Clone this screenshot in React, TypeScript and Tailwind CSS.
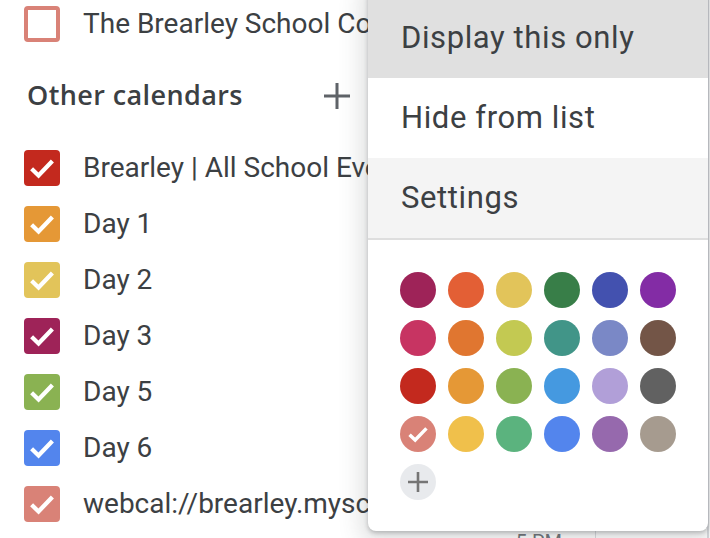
import React from "react";

type Cal = { name: string; color: string; checked: boolean };

const top: Cal = { name: "The Brearley School Community", color: "#d98277", checked: false };
const others: Cal[] = [
  { name: "Brearley | All School Events", color: "#c3291e", checked: true },
  { name: "Day 1", color: "#e59836", checked: true },
  { name: "Day 2", color: "#e2c45a", checked: true },
  { name: "Day 3", color: "#9e2358", checked: true },
  { name: "Day 5", color: "#8ab252", checked: true },
  { name: "Day 6", color: "#5385ed", checked: true },
  { name: "webcal://brearley.myschoolapp.com", color: "#d98277", checked: true },
];

const palette = [
  ["#9e2358", "#e35f35", "#e2c45a", "#387e48", "#4351af", "#832ca5"],
  ["#c73462", "#e07630", "#c3c952", "#419588", "#7a88c6", "#735547"],
  ["#c3291e", "#e59836", "#8ab252", "#4599e0", "#b19fd8", "#616161"],
  ["#d98277", "#f0c04b", "#5bb37e", "#5385ed", "#9669ad", "#a69b8f"],
];

function Check({ size = 24 }: { size?: number }) {
  return (
    <svg width={size} height={size} viewBox="0 0 24 24" fill="none">
      <path d="M4.2 12.6 L9.4 17.6 L19.8 6.8" stroke="white" strokeWidth="3.2" strokeLinecap="butt" strokeLinejoin="miter" />
    </svg>
  );
}

function Row({ cal }: { cal: Cal }) {
  return (
    <div className="flex h-14 items-center pl-6 whitespace-nowrap">
      {cal.checked ? (
        <div
          className="flex h-9 w-9 shrink-0 items-center justify-center rounded-[4px]"
          style={{ backgroundColor: cal.color }}
        >
          <Check size={32} />
        </div>
      ) : (
        <div
          className="h-9 w-9 shrink-0 rounded-[4px] border-[4px]"
          style={{ borderColor: cal.color }}
        />
      )}
      <span className="ml-[23px] text-[28px] text-[#3c4043]">{cal.name}</span>
    </div>
  );
}

export default function App() {
  return (
    <div
      className="relative h-[538px] w-[710px] overflow-hidden bg-white"
      style={{ fontFamily: "Roboto, 'Noto Sans', sans-serif" }}
    >
      <div className="flex h-full">
        <div className="w-[500px] shrink-0 -mt-1">
          <Row cal={top} />
          <div className="flex h-[88px] items-center pl-[27px] pr-[148px]">
            <span className="flex-1 -mt-[2px] font-['Open_Sans',Roboto,sans-serif] text-[27px] font-semibold tracking-[0.4px] text-[#3c4043]">
              Other calendars
            </span>
            <svg width="30" height="30" viewBox="0 0 30 30">
              <path d="M15 2 V28 M2 15 H28" stroke="#5f6368" strokeWidth="3" />
            </svg>
          </div>
          {others.map((c) => (
            <Row key={c.name} cal={c} />
          ))}
        </div>
        <div className="w-[95px] shrink-0 pt-[527px] pr-[33px] text-right text-[20px] text-[#70757a]">
          5 PM
        </div>
        <div className="flex w-[114px] shrink-0 flex-col border-l border-r-2 border-[#dadce0]">
          <div className="h-12 shrink-0 border-b border-[#dadce0]" />
          <div className="h-20 shrink-0 border-b border-[#dadce0]" />
          <div className="h-20 shrink-0 border-b border-[#dadce0]" />
          <div className="h-20 shrink-0 border-b border-[#dadce0]" />
          <div className="h-20 shrink-0 border-b border-[#dadce0]" />
          <div className="h-20 shrink-0 border-b border-[#dadce0]" />
          <div className="h-20 shrink-0 border-b border-[#dadce0]" />
        </div>
      </div>

      <div className="absolute left-[368px] top-[-18px] w-[340px] rounded-lg bg-white pt-4 pb-[31px] shadow-[0_2px_4px_rgba(60,64,67,0.3),0_6px_22px_8px_rgba(60,64,67,0.15)]">
        <div className="flex h-20 items-center bg-[#e0e0e0] pl-[33px] text-[31px] tracking-[0.6px] text-[#3c4043]">Display this only</div>
        <div className="flex h-20 items-center pl-[33px] text-[31px] tracking-[0.6px] text-[#3c4043]">Hide from list</div>
        <div className="flex h-20 items-center bg-[#f4f4f4] pl-[33px] text-[31px] tracking-[0.6px] text-[#3c4043]">Settings</div>
        <div className="h-[2px] bg-[#dedede]" />
        <div className="grid grid-cols-[repeat(6,36px)] gap-3 pl-8 pt-8">
          {palette.flat().map((c, i) => (
            <div
              key={i}
              className="flex h-9 w-9 items-center justify-center rounded-full"
              style={{ backgroundColor: c }}
            >
              {i === 18 ? <Check size={26} /> : null}
            </div>
          ))}
          <div className="flex h-9 w-9 items-center justify-center rounded-full bg-[#e8eaed]">
            <svg width="22" height="22" viewBox="0 0 22 22">
              <path d="M11 1 V21 M1 11 H21" stroke="#757575" strokeWidth="2.6" />
            </svg>
          </div>
        </div>
      </div>
    </div>
  );
}
